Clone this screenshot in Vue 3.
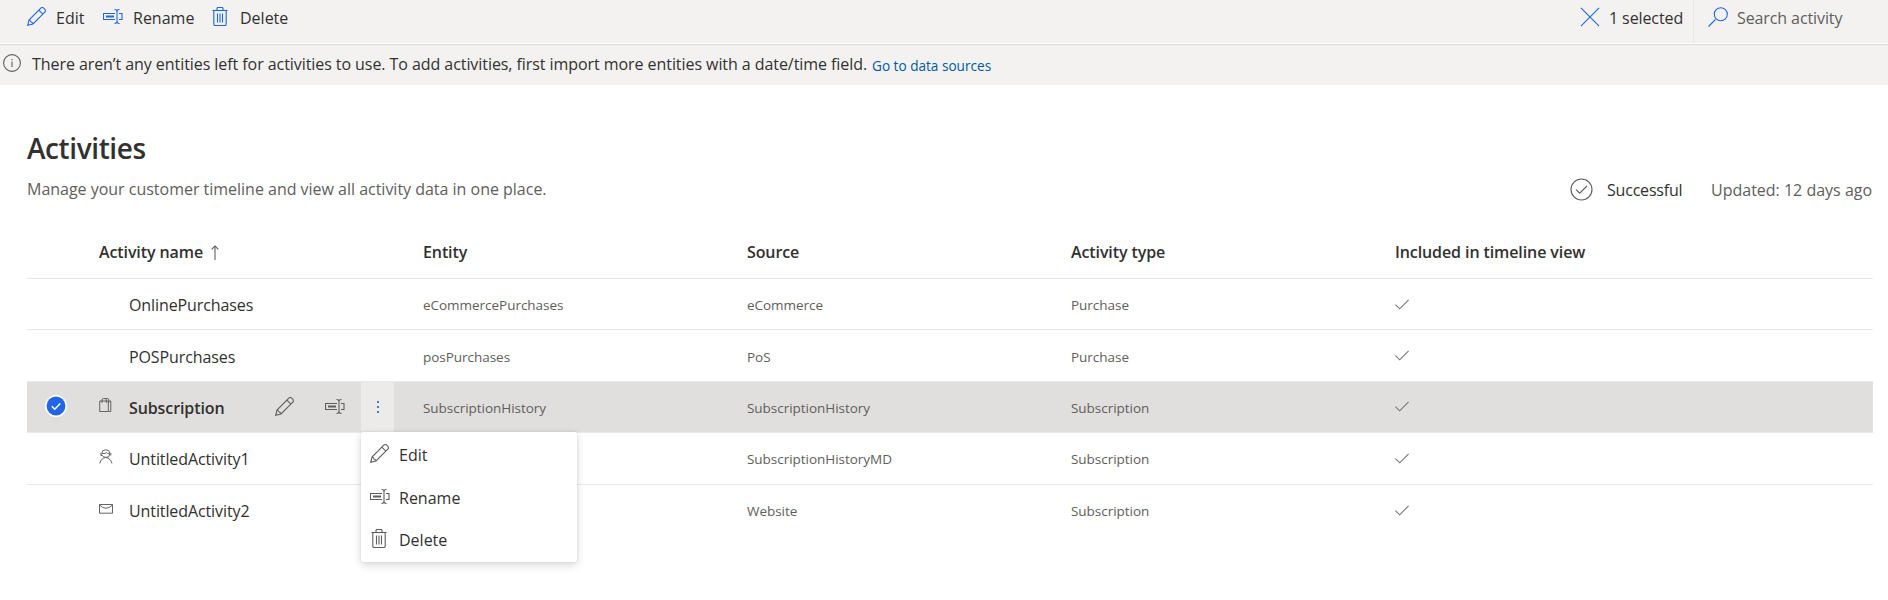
<script setup>
import { h } from 'vue'

const shapes = {
  edit: { w: 19, h: 19, d: ['M.7 18.3 2 13 13.3 1.7a2.25 2.25 0 0 1 3.9 0 2.3 2.3 0 0 1 .1 4L6 17Z', 'M11.8 3.2 15.8 7.2', 'M2 13Q3.6 13.2 4 15 5.8 15.4 6 17'] },
  rename: { w: 20, h: 15, d: ['M12 4.5H.5v6H12', 'M3 7h8M3 8h8', 'M16 4.5h3v6h-3', 'M11.500.5q2.500 0 2.500 2v10q0 2-2.500 2M16.500.5q-2.500 0-2.500 2v10q0 2 2.500 2'] },
  trash: { w: 16, h: 19, d: ['M.5 3.5h15', 'M5 3.5v-2q0-1 1-1h4q1 0 1 1v2', 'M1.8 3.5v13.7q0 1.3 1.3 1.3h9.8q1.3 0 1.3-1.3V3.5', 'M5.5 6.5v9M8 6.5v9M10.5 6.5v9'] },
  close: { w: 20, h: 20, d: ['M.9.9 19.1 19.1M19.1.9.9 19.1'] },
  search: { w: 20, h: 20, d: ['M.5 19.5 7.5 12.5', 'M19.3 7.2a6.5 6.5 0 1 1-13 0a6.5 6.5 0 1 1 13 0Z'] },
  info: { w: 18, h: 18, d: ['M17.4 9a8.4 8.4 0 1 1-16.8 0a8.4 8.4 0 1 1 16.8 0Z', 'M9 7.5v5.5M9 5v1.3'] },
  success: { w: 23, h: 23, d: ['M22 11.5a10.5 10.5 0 1 1-21 0a10.5 10.5 0 1 1 21 0Z', 'M6 11.6 9.7 15.2 17 8'] },
  check: { w: 14, h: 11, d: ['M.4 5.6 4.7 9.8 13.6.8'] },
  up: { w: 8, h: 15, d: ['M4 15V1', 'M.6 4.4 4 1 7.4 4.4'] },
  bag: { w: 13, h: 14, d: ['M.7 3h8.600v10.500H.7Z', 'M9.300 3h2.500v10.500H9.300', 'M3 5V2q0-1.500 1.500-1.500h1.500Q7.300.5 7.300 2v3', 'M6 .5h2.300q1.500 0 1.500 1.500v3'] },
  person: { w: 14, h: 15, d: ['M.7 14.500Q1.300 10.800 4.700 9Q6.800 8 9 9Q12.300 10.800 13 14.500', 'M2.800 5.500V4.500Q2.800.8 6.800.8T10.900 4.500Q10.900 8.500 6.900 8.500', 'M1.900 3.800v2.700h1.500l1.200 1.500h1.900M11.800 3.800v2.700', 'M3.200 4.500Q6.500 5 7.500 3.500 8.500 5 10.800 4.800'] },
  mail: { w: 14, h: 10, d: ['M.5.5h13v8.700H.5Z', 'M.5 1 Q7 7.500 13.500 1'] },
}

const Icon = (props) => {
  const s = shapes[props.name]
  return h('svg', { width: s.w, height: s.h, viewBox: `0 0 ${s.w} ${s.h}`, fill: 'none', stroke: 'currentColor', 'stroke-width': 1.1 },
    s.d.map((d) => h('path', { d })))
}
Icon.props = ['name']

const commands = [
  { icon: 'edit', label: 'Edit' },
  { icon: 'rename', label: 'Rename' },
  { icon: 'trash', label: 'Delete' },
]
const columns = ['Activity name', 'Entity', 'Source', 'Activity type', 'Included in timeline view']
const rows = [
  { name: 'OnlinePurchases', entity: 'eCommercePurchases', source: 'eCommerce', type: 'Purchase' },
  { name: 'POSPurchases', entity: 'posPurchases', source: 'PoS', type: 'Purchase' },
  { name: 'Subscription', entity: 'SubscriptionHistory', source: 'SubscriptionHistory', type: 'Subscription', icon: 'bag', selected: true },
  { name: 'UntitledActivity1', entity: '', source: 'SubscriptionHistoryMD', type: 'Subscription', icon: 'person' },
  { name: 'UntitledActivity2', entity: '', source: 'Website', type: 'Subscription', icon: 'mail' },
]
</script>

<template>
  <div class="page">
    <header class="toolbar">
      <button v-for="c in commands" :key="c.label" class="command" :class="c.icon">
        <Icon :name="c.icon" /><span>{{ c.label }}</span>
      </button>
      <div class="right">
        <button class="selection"><Icon name="close" /><span>1 selected</span></button>
        <div class="search"><Icon name="search" /><span>Search activity</span></div>
      </div>
    </header>
    <div class="notice">
      <Icon name="info" />
      <span class="message">There aren’t any entities left for activities to use. To add activities, first import more entities with a date/time field.</span>
      <a>Go to data sources</a>
    </div>
    <main>
      <h1>Activities</h1>
      <div class="summary">
        <span class="intro">Manage your customer timeline and view all activity data in one place.</span>
        <div class="status">
          <Icon name="success" />
          <span class="state">Successful</span>
          <span class="updated">Updated: 12 days ago</span>
        </div>
      </div>
      <section class="table">
        <div class="row head">
          <span></span>
          <span v-for="(c, i) in columns" :key="c" class="heading"><span>{{ c }}</span><Icon v-if="i === 0" name="up" /></span>
        </div>
        <div v-for="r in rows" :key="r.name" class="row" :class="{ selected: r.selected }">
          <div class="pick">
            <svg v-if="r.selected" width="22" height="22" viewBox="0 0 22 22">
              <circle cx="11" cy="11" r="11" fill="#fff" />
              <circle cx="11" cy="11" r="9.4" fill="#2266e3" />
              <path d="M6.8 11.3 9.7 14.2 15.3 8.5" fill="none" stroke="#fff" stroke-width="1.5" />
            </svg>
          </div>
          <div class="name">
            <span class="kind"><Icon v-if="r.icon" :name="r.icon" /></span>
            <span class="label">{{ r.name }}</span>
            <template v-if="r.selected">
              <Icon name="edit" class="act-edit" />
              <Icon name="rename" class="act-rename" />
              <div class="more">
                <i></i><i></i><i></i>
                <div class="menu">
                  <div v-for="c in commands" :key="c.label" class="item">
                    <span class="glyph"><Icon :name="c.icon" /></span><span>{{ c.label }}</span>
                  </div>
                </div>
              </div>
            </template>
          </div>
          <span class="cell">{{ r.entity }}</span>
          <span class="cell">{{ r.source }}</span>
          <span class="cell">{{ r.type }}</span>
          <span class="tick"><Icon name="check" /></span>
        </div>
      </section>
    </main>
  </div>
</template>

<style>
body { margin: 0; background: #fff; }
</style>

<style scoped>
.page { height: 600px; overflow: hidden; font-family: "Open Sans", "Noto Sans", sans-serif; font-size: 16px; color: #323130; white-space: nowrap; }
svg { flex: none; display: block; }
button { border: 0; padding: 0; background: none; font: inherit; color: inherit; }
.toolbar { box-sizing: border-box; height: 43px; padding: 0 59px 8px 27px; display: flex; align-items: center; background: #f3f2f1; }
.command { display: flex; align-items: center; }
.command svg, .right svg { color: #2266e3; margin-bottom: 2px; }
.command.edit { width: 76px; gap: 10px; }
.command.rename { width: 109px; gap: 10px; }
.command.trash { gap: 12px; }
.right { margin-left: auto; display: flex; align-items: center; letter-spacing: -.1px; }
.selection { display: flex; align-items: center; gap: 9px; width: 113px; letter-spacing: -.1px; }
.search { width: 136px; height: 43px; margin-bottom: -8px; padding-bottom: 8px; box-sizing: border-box; display: flex; align-items: center; gap: 9px; padding-left: 14px; border-left: 1px solid #e8e8e8; color: #605e5c; }
.notice { box-sizing: border-box; height: 42px; border-top: 1px solid #fff; box-shadow: inset 0 1px #dcdcdc; background: #f3f2f1; padding: 0 0 1px 3px; display: flex; align-items: center; }
.notice svg { color: #605e5c; margin: 0 11px 2px 0; }
.message { width: 840px; letter-spacing: -.065px; }
.notice a { font-size: 13.6px; color: #005a9e; padding-top: 2px; }
main { padding: 43px 15px 0 27px; }
h1 { margin: 0; font-size: 28px; line-height: 40px; font-weight: 600; letter-spacing: -.4px; }
.summary { margin-top: 6px; height: 30px; display: flex; align-items: center; justify-content: space-between; color: #605e5c; }
.intro { letter-spacing: -.015px; }
.status { display: flex; align-items: center; padding-top: 1px; }
.state { margin-left: 14px; color: #323130; width: 104px; letter-spacing: -.2px; }
.updated { width: 162px; }
.table { margin-top: 22px; }
.row { box-sizing: border-box; height: 51.4px; display: grid; grid-template-columns: 72px repeat(4, 324px) 1fr; align-items: center; border-bottom: 1px solid #eaeaea; }
.row:last-child { border-bottom: 0; }
.head { height: 53px; }
.heading { display: flex; align-items: center; gap: 8px; font-weight: 600; letter-spacing: -.1px; }
.heading svg { color: #605e5c; }
.selected { background: #e1dfdd; }
.pick { padding: 0 0 1px 18px; }
.name { display: flex; align-items: center; height: 100%; }
.kind { width: 30px; padding-bottom: 3px; }
.kind svg { stroke-width: .95; }
.label { width: 146px; padding-top: 2px; letter-spacing: -.1px; }
.selected .label { font-weight: 600; }
.name svg { color: #605e5c; }
.act-edit { margin-right: 31px; }
.act-rename { margin-right: 16px; }
.more { position: relative; width: 33px; height: 50px; background: #edebe9; border-radius: 2px; display: flex; flex-direction: column; align-items: center; justify-content: center; gap: 3px; }
.more i { width: 2px; height: 2px; background: #4a7bd0; }
.menu { position: absolute; z-index: 2; top: 100%; left: 0; width: 216px; height: 130px; box-sizing: border-box; padding-top: 2px; background: #fff; border-radius: 2px; box-shadow: 0 3px 8px rgba(0,0,0,.16), 0 0 2px rgba(0,0,0,.12); }
.item { height: 42.5px; display: flex; align-items: center; }
.glyph { width: 38px; padding: 0 0 3px 9px; box-sizing: border-box; }
.item:last-child .glyph { padding-left: 10px; }
.cell { font-size: 13.5px; color: #605e5c; padding-top: 2px; letter-spacing: -.03px; }
.tick { color: #797775; }
</style>
